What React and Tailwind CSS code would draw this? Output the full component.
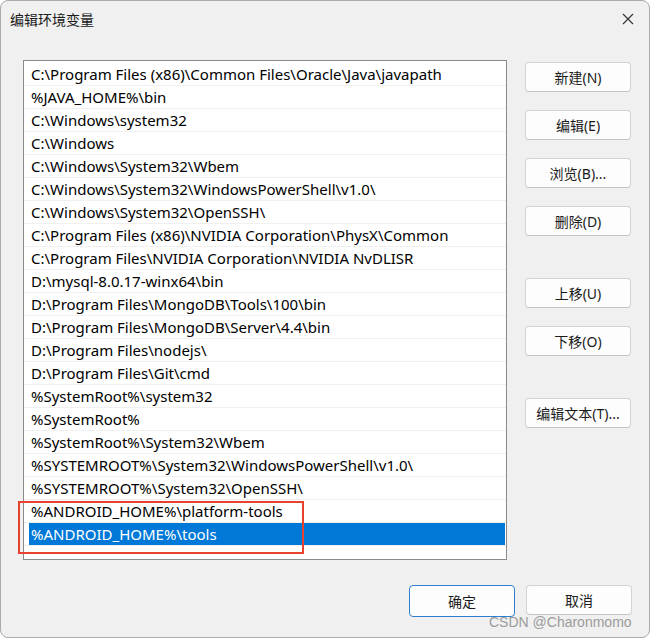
import React from "react";

const paths = [
    "C:\\Program Files (x86)\\Common Files\\Oracle\\Java\\javapath",
    "%JAVA_HOME%\\bin",
    "C:\\Windows\\system32",
    "C:\\Windows",
    "C:\\Windows\\System32\\Wbem",
    "C:\\Windows\\System32\\WindowsPowerShell\\v1.0\\",
    "C:\\Windows\\System32\\OpenSSH\\",
    "C:\\Program Files (x86)\\NVIDIA Corporation\\PhysX\\Common",
    "C:\\Program Files\\NVIDIA Corporation\\NVIDIA NvDLISR",
    "D:\\mysql-8.0.17-winx64\\bin",
    "D:\\Program Files\\MongoDB\\Tools\\100\\bin",
    "D:\\Program Files\\MongoDB\\Server\\4.4\\bin",
    "D:\\Program Files\\nodejs\\",
    "D:\\Program Files\\Git\\cmd",
    "%SystemRoot%\\system32",
    "%SystemRoot%",
    "%SystemRoot%\\System32\\Wbem",
    "%SYSTEMROOT%\\System32\\WindowsPowerShell\\v1.0\\",
    "%SYSTEMROOT%\\System32\\OpenSSH\\",
    "%ANDROID_HOME%\\platform-tools",
    "%ANDROID_HOME%\\tools",
];

const selected = 20;

const Btn = ({ children, primary }) => (
    <button
        className={
            "w-[106px] rounded-[4px] bg-[#fdfdfd] text-[14px] text-[#1b1b1b] " +
            (primary ? "h-[32px] border border-[#2f7fcf]" : "h-[30px] border border-[#d3d3d3] border-b-[#c4c4c4]")
        }
    >
        {children}
    </button>
);

const App = () => {
    return (
        <div
            className="relative w-[650px] h-[638px] bg-[#f0f0f0] border border-[#a9a9a9] rounded-[8px] overflow-hidden flex flex-col"
            style={{ fontFamily: '"Noto Sans", "Noto Sans CJK SC", sans-serif' }}
        >
            {/* Title bar */}
            <div className="h-[36px] flex items-center justify-between pl-[9px] pr-[14px]">
                <span className="text-[14px] text-[#1a1a1a]">编辑环境变量</span>
                <svg width="12" height="12" viewBox="0 0 12 12" className="mr-[1px]">
                    <path d="M1 1 L11 11 M11 1 L1 11" stroke="#333" strokeWidth="1.1" fill="none" />
                </svg>
            </div>

            {/* Body */}
            <div className="flex pl-[22px] mt-[23px]">
                {/* Path list */}
                <div className="relative w-[484px] h-[500px] bg-white border border-[#8a8a8a] pt-[2px]">
                    {paths.map((p, i) => (
                        <div key={i} className="h-[23px] border-b border-[#f0f0f0] pl-[5px] pr-[1px]">
                            <div
                                className={
                                    "h-full flex items-center pl-[2px] text-[15px] whitespace-nowrap " +
                                    (i === selected ? "bg-[#0078d7] text-white" : "text-black")
                                }
                            >
                                {p}
                            </div>
                        </div>
                    ))}
                    {/* red annotation */}
                    <div className="absolute left-[-6px] top-[440px] w-[286px] h-[53px] border-2 border-[#e8412f]" />
                </div>

                {/* Side buttons */}
                <div className="ml-[18px] mt-[2px] flex flex-col">
                    <div className="flex flex-col gap-[18px]">
                        <Btn>新建(N)</Btn>
                        <Btn>编辑(E)</Btn>
                        <Btn>浏览(B)...</Btn>
                        <Btn>删除(D)</Btn>
                    </div>
                    <div className="flex flex-col gap-[18px] mt-[42px]">
                        <Btn>上移(U)</Btn>
                        <Btn>下移(O)</Btn>
                    </div>
                    <div className="mt-[42px]">
                        <Btn>编辑文本(T)...</Btn>
                    </div>
                </div>
            </div>

            {/* Bottom buttons */}
            <div className="flex justify-end gap-[11px] pr-[17px] mt-[25px]">
                <Btn primary>确定</Btn>
                <Btn primary={false}>
                    <span>取消</span>
                </Btn>
            </div>

            {/* watermark */}
            <div
                className="absolute left-[488px] top-[611px] text-[14px] text-[#9b9b9b]"
                style={{ fontFamily: '"Liberation Sans", sans-serif' }}
            >
                CSDN @Charonmomo
            </div>
        </div>
    );
};

export default App;
